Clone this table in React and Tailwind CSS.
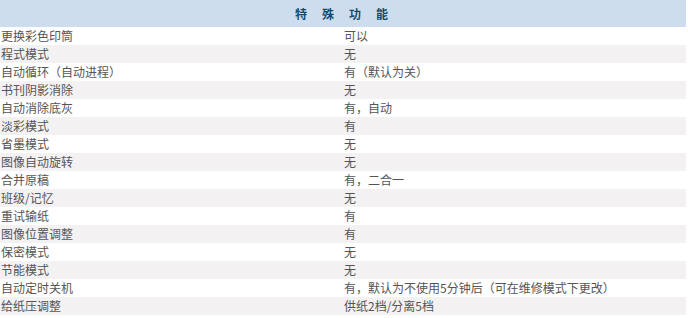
const rows = [
  ["更换彩色印筒", "可以"],
  ["程式模式", "无"],
  ["自动循环（自动进程）", "有（默认为关）"],
  ["书刊阴影消除", "无"],
  ["自动消除底灰", "有，自动"],
  ["淡彩模式", "有"],
  ["省墨模式", "无"],
  ["图像自动旋转", "无"],
  ["合并原稿", "有，二合一"],
  ["班级/记忆", "无"],
  ["重试输纸", "有"],
  ["图像位置调整", "有"],
  ["保密模式", "无"],
  ["节能模式", "无"],
  ["自动定时关机", "有，默认为不使用5分钟后（可在维修模式下更改）"],
  ["给纸压调整", "供纸2档/分离5档"],
];

export default function App() {
  return (
    <div className="w-[688px] h-[318px] bg-white" style={{ fontFamily: '"Noto Sans CJK SC", "Noto Sans", sans-serif' }}>
      <div className="w-[686px]">
        <div className="h-[27px] bg-[#cddded] flex items-center justify-center gap-[15px] text-[12px] font-bold text-[#134a6e] pr-[3px]">
          <span>特</span>
          <span>殊</span>
          <span>功</span>
          <span>能</span>
        </div>
        {rows.map((r, i) => (
          <div
            key={i}
            className={`h-[18px] flex items-center text-[12px] leading-[18px] text-[#555555] ${i % 2 === 1 ? "bg-[#f3f1f2]" : "bg-white"}`}
          >
            <div className="w-[344px] pl-px whitespace-nowrap">{r[0]}</div>
            <div className="flex-1 whitespace-nowrap">{r[1]}</div>
          </div>
        ))}
      </div>
    </div>
  );
}
